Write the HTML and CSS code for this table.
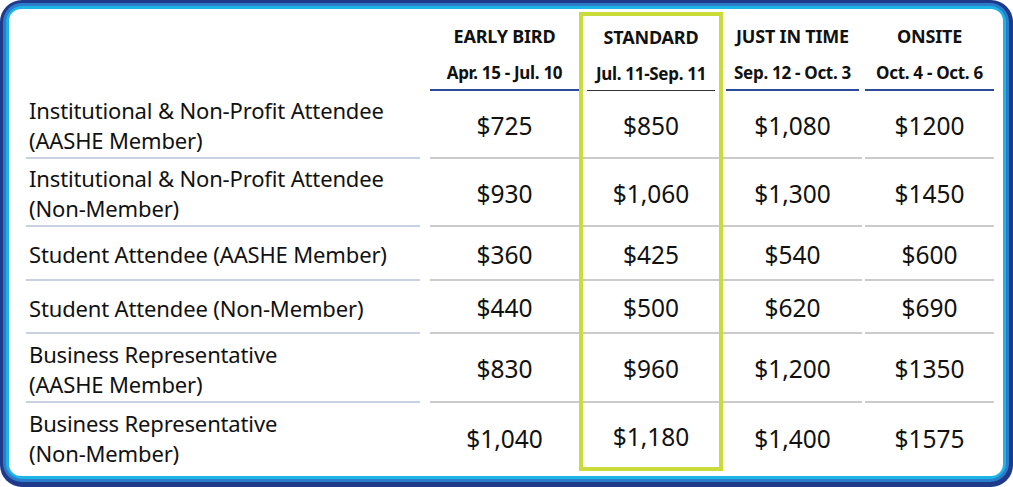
FILE: index.html
```html
<!DOCTYPE html>
<html lang="en">
<head>
<meta charset="utf-8">
<title>Registration Rates</title>
<link rel="stylesheet" href="styles.css">
</head>
<body>
<div class="frame">
  <div class="frame-mid">
    <div class="frame-inner">
      <div class="panel">
        <div class="rates">
          <div class="cell label head-blank"></div>
          <div class="cell head"><span class="title">EARLY BIRD</span><span class="dates">Apr. 15 - Jul. 10</span></div>
          <div class="cell head std first"><span class="title">STANDARD</span><span class="dates">Jul. 11-Sep. 11</span></div>
          <div class="cell head c4"><span class="title">JUST IN TIME</span><span class="dates">Sep. 12 - Oct. 3</span></div>
          <div class="cell head"><span class="title">ONSITE</span><span class="dates">Oct. 4 - Oct. 6</span></div>

          <div class="cell label">Institutional &amp; Non-Profit Attendee<br>(AASHE Member)</div>
          <div class="cell price">$725</div>
          <div class="cell price std">$850</div>
          <div class="cell price c4">$1,080</div>
          <div class="cell price">$1200</div>

          <div class="cell label">Institutional &amp; Non-Profit Attendee<br>(Non-Member)</div>
          <div class="cell price">$930</div>
          <div class="cell price std">$1,060</div>
          <div class="cell price c4">$1,300</div>
          <div class="cell price">$1450</div>

          <div class="cell label">Student Attendee (AASHE Member)</div>
          <div class="cell price">$360</div>
          <div class="cell price std">$425</div>
          <div class="cell price c4">$540</div>
          <div class="cell price">$600</div>

          <div class="cell label">Student Attendee (Non-Member)</div>
          <div class="cell price">$440</div>
          <div class="cell price std">$500</div>
          <div class="cell price c4">$620</div>
          <div class="cell price">$690</div>

          <div class="cell label">Business Representative<br>(AASHE Member)</div>
          <div class="cell price">$830</div>
          <div class="cell price std">$960</div>
          <div class="cell price c4">$1,200</div>
          <div class="cell price">$1350</div>

          <div class="cell label last">Business Representative<br>(Non-Member)</div>
          <div class="cell price last">$1,040</div>
          <div class="cell price std last">$1,180</div>
          <div class="cell price c4 last">$1,400</div>
          <div class="cell price last">$1575</div>
        </div>
      </div>
    </div>
  </div>
</div>
</body>
</html>
```

FILE: styles.css
```css
html, body {
  margin: 0;
  padding: 0;
  background: #ffffff;
}

body {
  width: 1013px;
  height: 487px;
  font-family: "Noto Sans", "Open Sans", sans-serif;
  color: #111111;
}

.frame {
  width: 1013px;
  height: 487px;
  box-sizing: border-box;
  background: #1f3a8a;
  border-radius: 22px;
  padding: 3px 4px 5px 3px;
}

.frame-mid {
  height: 100%;
  box-sizing: border-box;
  background: #2c7ccc;
  border-radius: 19px;
  padding: 3px;
}

.frame-inner {
  height: 100%;
  box-sizing: border-box;
  background: #1db4e6;
  border-radius: 16px;
  padding: 3px;
}

.panel {
  height: 100%;
  box-sizing: border-box;
  background: #ffffff;
  border-radius: 12px;
  padding: 3px 8px 2px 17px;
}

.rates {
  display: grid;
  grid-template-columns: 404px 149px 144px 142px 129px;
  grid-template-rows: 79px 68px 68px 54px 53px 69px 68px;
}

.cell {
  box-sizing: border-box;
  border-bottom: 2px solid #cbcbcb;
  display: flex;
  align-items: center;
  justify-content: center;
  min-width: 0;
  white-space: nowrap;
}

.cell.last {
  border-bottom: none;
}

.label {
  margin-right: 10px;
  justify-content: flex-start;
  padding-left: 3px;
  padding-top: 2px;
  font-size: 22px;
  line-height: 30px;
  letter-spacing: -0.15px;
  border-bottom-color: #c9d0e2;
}

.head-blank {
  border-bottom: none;
}

.head {
  flex-direction: column;
  justify-content: flex-end;
  align-items: center;
  gap: 15px;
  padding-bottom: 5px;
  border-bottom: 2px solid #2b4a9a;
  font-weight: 700;
}

.head .title {
  font-size: 18px;
  line-height: 22px;
  letter-spacing: -0.2px;
}

.head .dates {
  font-size: 17px;
  line-height: 22px;
  letter-spacing: -0.3px;
}

.head.c4 {
  margin: 0 6px 0 3px;
}

.c4 {
  margin-right: 3px;
}

.price {
  font-size: 24.5px;
  line-height: 30px;
  padding-top: 3px;
}

/* highlighted STANDARD column */
.std {
  border-left: 4px solid #c9dc3c;
  border-right: 4px solid #c9dc3c;
  border-bottom: none;
  padding-bottom: 2px;
  box-shadow: inset 0 -2px 0 #cbcbcb;
}

.std.first {
  border-top: 4px solid #c9dc3c;
  box-shadow: none;
  padding-bottom: 6px;
  background: linear-gradient(#333333, #333333) no-repeat center bottom / 128px 1px;
}

.std.last {
  border-bottom: 4px solid #c9dc3c;
  box-shadow: none;
  padding-bottom: 0;
}
```
